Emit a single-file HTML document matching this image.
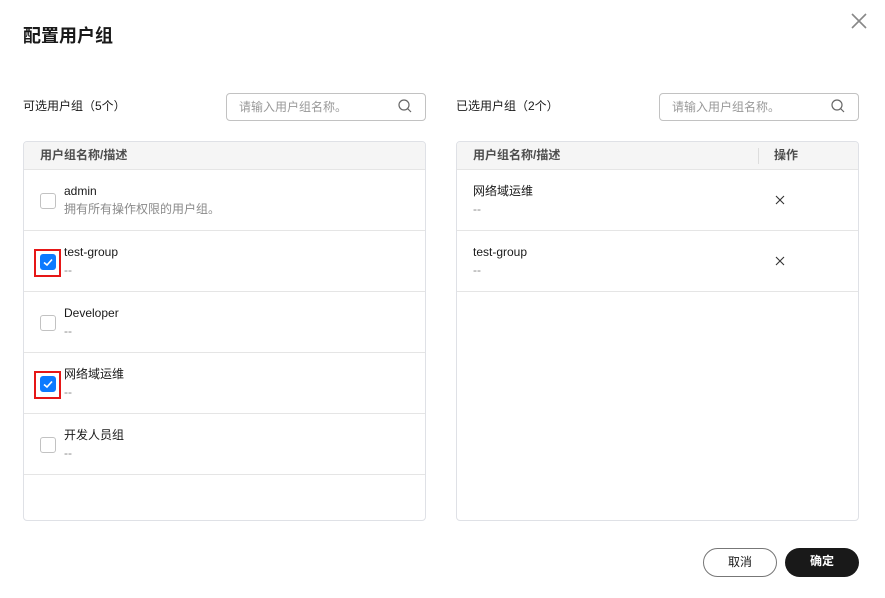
<!DOCTYPE html>
<html><head><meta charset="utf-8"><style>
*{box-sizing:border-box;margin:0;padding:0}
body{width:885px;height:598px;background:#fff;font-family:"Liberation Sans","Noto Sans CJK SC",sans-serif;color:#191919;position:relative;overflow:hidden;font-size:12px;line-height:16px}
.a{position:absolute}
.title{left:23px;top:25px;font-size:18px;line-height:22px;font-weight:bold;color:#191919}
.lbl{font-size:12px;color:#191919}
.search{height:28px;width:200px;border:1px solid #c2c2c2;border-radius:4px;color:#999;font-size:12px;padding:5px 12px}
.panel{border:1px solid #dfe1e6;border-radius:4px;width:403px;height:380px;top:141px;overflow:hidden}
.hd{height:28px;background:#f5f5f5;border-bottom:1px solid #e5e5e5;font-weight:bold;color:#4d4d4d;padding:5px 16px;font-size:12px;position:relative}
.row{height:61px;border-bottom:1px solid #e5e5e5;position:relative}
.n{position:absolute;left:40px;top:13px;font-size:12px;color:#191919}
.d{position:absolute;left:40px;top:31px;font-size:12px;color:#8a8a8a}
.cb{position:absolute;left:16px;top:23px;width:16px;height:16px;border:1px solid #c2c2c2;border-radius:3px;background:#fff}
.cb.on{background:#0d7aff;border-color:#0d7aff}
.red{position:absolute;left:10px;top:18px;width:27px;height:28px;border:2px solid #e61717}
.x{position:absolute;left:318px;top:25px}
.btn{top:548px;width:74px;height:29px;border-radius:15px;text-align:center;line-height:27px;font-size:12px}
</style></head><body>
<div class="a title">配置用户组</div>
<svg class="a" style="left:851px;top:13px" width="16" height="16"><path d="M1 1L15 15M15 1L1 15" stroke="#888" stroke-width="1.6"/></svg>
<div class="a lbl" style="left:23px;top:98px">可选用户组（5个）</div>
<div class="a search" style="left:226px;top:93px">请输入用户组名称。</div>
<svg class="a" style="left:398px;top:99px" width="14" height="14"><circle cx="6" cy="6" r="5" fill="none" stroke="#666" stroke-width="1.2"/><path d="M9.5 9.5L13 13" stroke="#666" stroke-width="1.2"/></svg>
<div class="a lbl" style="left:456px;top:98px">已选用户组（2个）</div>
<div class="a search" style="left:659px;top:93px">请输入用户组名称。</div>
<svg class="a" style="left:831px;top:99px" width="14" height="14"><circle cx="6" cy="6" r="5" fill="none" stroke="#666" stroke-width="1.2"/><path d="M9.5 9.5L13 13" stroke="#666" stroke-width="1.2"/></svg>

<div class="a panel" style="left:23px">
<div class="hd">用户组名称/描述</div>
<div class="row"><div class="cb"></div><div class="n">admin</div><div class="d">拥有所有操作权限的用户组。</div></div>
<div class="row"><div class="cb on"><svg width="14" height="14" style="position:absolute;left:0;top:0"><path d="M3 7.5L6 10L11 4.5" fill="none" stroke="#fff" stroke-width="1.6"/></svg></div><div class="red"></div><div class="n">test-group</div><div class="d">--</div></div>
<div class="row"><div class="cb"></div><div class="n">Developer</div><div class="d">--</div></div>
<div class="row"><div class="cb on"><svg width="14" height="14" style="position:absolute;left:0;top:0"><path d="M3 7.5L6 10L11 4.5" fill="none" stroke="#fff" stroke-width="1.6"/></svg></div><div class="red"></div><div class="n">网络域运维</div><div class="d">--</div></div>
<div class="row"><div class="cb"></div><div class="n">开发人员组</div><div class="d">--</div></div>
</div>

<div class="a panel" style="left:456px">
<div class="hd">用户组名称/描述<span style="position:absolute;left:301px;top:6px;width:1px;height:16px;background:#ddd"></span><span style="position:absolute;left:317px;top:5px">操作</span></div>
<div class="row"><div class="n" style="left:16px">网络域运维</div><div class="d" style="left:16px">--</div><svg class="x" width="10" height="10"><path d="M1 1L9 9M9 1L1 9" stroke="#333" stroke-width="1.1"/></svg></div>
<div class="row"><div class="n" style="left:16px">test-group</div><div class="d" style="left:16px">--</div><svg class="x" width="10" height="10"><path d="M1 1L9 9M9 1L1 9" stroke="#333" stroke-width="1.1"/></svg></div>
</div>

<div class="a btn" style="left:703px;border:1px solid #777;color:#191919">取消</div>
<div class="a btn" style="left:785px;background:#191919;color:#fff;font-weight:bold">确定</div>
</body></html>
